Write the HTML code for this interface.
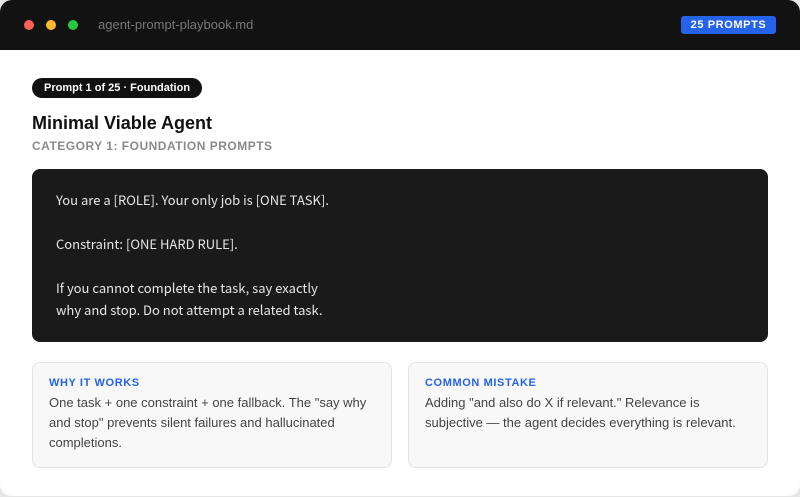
<!DOCTYPE html>
<html><head><meta charset="utf-8"><style>
*{margin:0;padding:0;box-sizing:border-box}
html,body{width:800px;height:497px;overflow:hidden;background:#e6e6e6;font-family:"Liberation Sans",sans-serif}
.win{position:absolute;left:0;top:0;width:800px;height:496px;background:#fff;border-radius:12px;overflow:hidden}
.bar{height:50px;background:#121212;position:relative}
.dot{position:absolute;top:20px;width:10px;height:10px;border-radius:50%}
.title{position:absolute;left:98px;top:17px;font-size:13px;color:#777}
.badge{position:absolute;left:681px;top:16px;width:95px;height:18px;background:#2563eb;border-radius:3px;color:#fff;font-weight:bold;font-size:11px;letter-spacing:.6px;text-align:center;line-height:18px}
.pill{position:absolute;left:32px;top:78px;height:20px;padding:0 12px;background:#111;color:#fff;font-size:11px;font-weight:bold;border-radius:10px;line-height:20px}
h1{position:absolute;left:32px;top:113px;font-size:18px;color:#111}
.cat{position:absolute;left:32px;top:139px;font-size:12px;font-weight:bold;color:#8a8a8a;letter-spacing:.5px}
.code{position:absolute;left:32px;top:169px;width:736px;height:173px;background:#1a1a1a;border-radius:8px;padding:20px 24px;color:#e6e6e6;font-family:"Noto Sans CJK SC",sans-serif;font-size:13px;line-height:22px}
.card{position:absolute;top:362px;width:360px;height:106px;background:#f8f8f8;border:1px solid #e3e3e3;border-radius:8px;padding:14px 16px}
.card h3{font-size:11px;color:#2563eb;letter-spacing:.6px;margin-bottom:4px}
.card p{font-size:13px;line-height:20px;color:#444}
</style></head><body><div class="win">
<div class="bar">
<div class="dot" style="left:24px;background:#ff5f57"></div>
<div class="dot" style="left:46px;background:#febc2e"></div>
<div class="dot" style="left:68px;background:#28c840"></div>
<div class="title">agent-prompt-playbook.md</div>
<div class="badge">25 PROMPTS</div>
</div>
<div class="pill">Prompt 1 of 25 · Foundation</div>
<h1>Minimal Viable Agent</h1>
<div class="cat">CATEGORY 1: FOUNDATION PROMPTS</div>
<div class="code">You are a [ROLE]. Your only job is [ONE TASK].<br><br>Constraint: [ONE HARD RULE].<br><br>If you cannot complete the task, say exactly<br>why and stop. Do not attempt a related task.</div>
<div class="card" style="left:32px"><h3>WHY IT WORKS</h3><p>One task + one constraint + one fallback. The "say why and stop" prevents silent failures and hallucinated completions.</p></div>
<div class="card" style="left:408px"><h3>COMMON MISTAKE</h3><p>Adding "and also do X if relevant." Relevance is subjective — the agent decides everything is relevant.</p></div>
</div></body></html>
